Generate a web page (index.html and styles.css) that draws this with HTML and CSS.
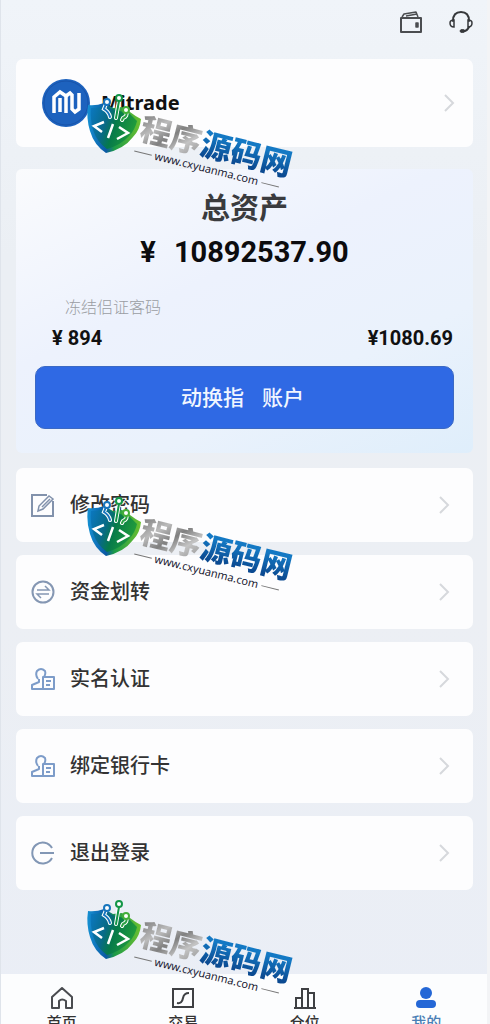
FILE: index.html
```html
<!DOCTYPE html>
<html lang="zh-CN">
<head>
<meta charset="utf-8">
<meta name="viewport" content="width=device-width, initial-scale=1">
<title>我的</title>
<link rel="stylesheet" href="styles.css">
</head>
<body>
<svg class="defs" aria-hidden="true">
  <defs>
    <linearGradient id="shieldFill" x1="0" y1="0" x2="1" y2="0.3">
      <stop offset="0" stop-color="#0b78c2"/><stop offset="0.4" stop-color="#086a86"/><stop offset="0.6" stop-color="#067a4a"/><stop offset="1" stop-color="#1f9a3c"/>
    </linearGradient>
    <linearGradient id="shieldEdge" x1="0" y1="0" x2="1" y2="0">
      <stop offset="0" stop-color="#1590d2"/><stop offset="0.35" stop-color="#0b58a4"/><stop offset="0.5" stop-color="#1c9a48"/><stop offset="1" stop-color="#6cc030"/>
    </linearGradient>
    <symbol id="shield" viewBox="0 0 58 64">
      <path d="M2 13Q10 14 18 11L27 16L36 15L44 20Q49 24 55 27Q54 38 47 45Q38 57 20 61Q8 53 4 39Q0 26 2 13Z" fill="url(#shieldEdge)"/>
      <path d="M5 16Q12 16 18 14L27 17L44 22Q48 26 51 29Q49 38 43 44Q35 53 21 57Q11 50 7 38Q4 27 5 16Z" fill="url(#shieldFill)"/>
      <g fill="none" stroke="#fff" stroke-width="4" stroke-linecap="round"><path d="M20 12L18 17Q23 20 24 25M33 8L30 26M40 20Q42 24 37 26L36 28"/></g>
      <g fill="none" stroke-width="2" stroke-linecap="round">
        <path d="M20 12L18 17Q23 20 24 25" stroke="#1775bd"/><path d="M33 9L30 26" stroke="#149647"/><path d="M40 20Q42 24 37 26L36 28" stroke="#2ba144"/>
      </g>
      <g fill="#fff" stroke-width="2"><circle cx="21" cy="10" r="3" stroke="#1775bd"/><circle cx="33" cy="6" r="3" stroke="#149647"/><circle cx="40" cy="18" r="3" stroke="#43ae3a"/></g>
      <path d="M18 30L8 34L16 40M27 32L22 46M33 35L42 41L31 47" fill="none" stroke="#fff" stroke-width="2.500"/>
    </symbol>
    <symbol id="chevron" viewBox="0 0 12 20"><path d="M2 2L10 10L2 18" fill="none" stroke="#d6d8dc" stroke-width="2"/></symbol>
    <symbol id="person-card" viewBox="0 0 24 24">
      <g fill="none" stroke="#7d9cc9" stroke-width="2" stroke-linejoin="round"><path d="M7 12Q4 8 6 4Q10 0 14 4Q15 7 13 10M8 12V15L1 18V22H12M12 10H23V22H12Z"/><path d="M15 14H20M15 18H19"/></g>
    </symbol>
  </defs>
</svg>

<div class="app">
  <header class="topbar">
    <button class="icon-button" type="button" aria-label="钱包">
      <svg width="24" height="24" viewBox="0 0 24 24" fill="none" stroke="#4b4d50" stroke-width="2" stroke-linejoin="round"><path d="M2 8H22V22H2Z"/><path d="M3 7L5 4L17 2L19 7M7 6L18 4" stroke-width="1.5"/><path d="M17 13H19V17H17Z" stroke-width="1.5" fill="#4b4d50"/></svg>
    </button>
    <button class="icon-button" type="button" aria-label="客服">
      <svg width="24" height="24" viewBox="0 0 24 24" fill="none" stroke="#36383b" stroke-width="2" stroke-linecap="round"><path d="M4 11Q4 2 12 2Q20 2 20 11"/><path d="M5 10Q1 10 1 13Q1 17 5 17ZM19 10Q23 10 23 13Q23 17 19 17Z" stroke-width="1.5"/><path d="M20 17Q18 21 15 21"/><ellipse cx="13.500" cy="21" rx="2.500" ry="1.500" fill="#36383b" stroke-width="1"/></svg>
    </button>
  </header>

  <main class="content">
    <a class="card profile" href="#profile">
      <svg width="50" height="50" viewBox="0 0 50 50" aria-hidden="true"><circle cx="25" cy="25" r="24" fill="#1d62be"/><circle cx="25" cy="25" r="22" fill="none" stroke="#1753aa"/><path d="M13 35V19L19 14L25 18V35" fill="none" stroke="#fff" stroke-width="3.500"/><path d="M19 34V20M25 18L29 15L31 17V31L34 34L38 31V15" fill="none" stroke="#fff" stroke-width="3.500"/></svg>
      <span class="brand">Mitrade</span>
      <svg class="chevron" width="12" height="20" aria-hidden="true"><use href="#chevron"/></svg>
    </a>

    <section class="assets">
      <h1 class="assets-title">总资产</h1>
      <p class="assets-total"><span>¥</span><span>10892537.90</span></p>
      <p class="assets-note">冻结侣证客码</p>
      <div class="assets-row"><span>¥ 894</span><span>¥1080.69</span></div>
      <button class="primary" type="button"><span>动换指</span><span>账户</span></button>
    </section>

    <nav class="menu" aria-label="账户设置">
      <a class="card item" href="#password">
        <svg width="24" height="24" viewBox="0 0 24 24" fill="none" stroke="#8292ac" stroke-width="2" aria-hidden="true"><path d="M16 2H1V23H22V8"/><path d="M7 18L8 13L18 3L22 6L12 16Z M11 14L19 6" stroke-width="1.500"/></svg>
        <span>修改密码</span><svg class="chevron" width="12" height="20" aria-hidden="true"><use href="#chevron"/></svg>
      </a>
      <a class="card item" href="#transfer">
        <svg width="24" height="24" viewBox="0 0 24 24" fill="none" stroke="#8597b3" stroke-width="2" aria-hidden="true"><circle cx="12" cy="12" r="10.500"/><path d="M6 10H18L14 6M18 14H6L10 18" stroke-width="1.500"/></svg>
        <span>资金划转</span><svg class="chevron" width="12" height="20" aria-hidden="true"><use href="#chevron"/></svg>
      </a>
      <a class="card item" href="#verify">
        <svg width="24" height="24" aria-hidden="true"><use href="#person-card"/></svg>
        <span>实名认证</span><svg class="chevron" width="12" height="20" aria-hidden="true"><use href="#chevron"/></svg>
      </a>
      <a class="card item" href="#bank">
        <svg width="24" height="24" aria-hidden="true"><use href="#person-card"/></svg>
        <span>绑定银行卡</span><svg class="chevron" width="12" height="20" aria-hidden="true"><use href="#chevron"/></svg>
      </a>
      <a class="card item" href="#logout">
        <svg width="24" height="24" viewBox="0 0 24 24" fill="none" stroke="#8297b5" stroke-width="2" aria-hidden="true"><path d="M21 7A10.500 10.500 0 1 0 21 17M9 12H23"/></svg>
        <span>退出登录</span><svg class="chevron" width="12" height="20" aria-hidden="true"><use href="#chevron"/></svg>
      </a>
    </nav>
  </main>

  <nav class="tabs" aria-label="主导航">
    <a class="tab" href="#home"><svg width="22" height="22" viewBox="0 0 22 22" fill="none" stroke="#4a4c50" stroke-width="2" stroke-linejoin="round"><path d="M1 10L11 1L21 10V21H15V14Q11 11 8 14V21H1Z"/></svg><span>首页</span></a>
    <a class="tab" href="#trade"><svg width="22" height="22" viewBox="0 0 22 22" fill="none" stroke="#3e4043" stroke-width="2"><path d="M1 2H21V20H1Z"/><path d="M5 16Q10 17 11 11Q12 6 17 6"/></svg><span>交易</span></a>
    <a class="tab" href="#positions"><svg width="22" height="22" viewBox="0 0 22 22" fill="none" stroke="#3e4043" stroke-width="2"><path d="M0 21H22M2 20V11H8V20M8 20V2H14V20M14 20V6H20V20"/></svg><span>仓位</span></a>
    <a class="tab active" href="#me" aria-current="page"><svg width="22" height="22" viewBox="0 0 22 22" fill="#2467d6"><circle cx="11" cy="6" r="6"/><rect x="1" y="13" width="20" height="8" rx="4"/></svg><span>我的</span></a>
  </nav>

  <div class="marks">
    <div class="mark"><svg width="58" height="64" aria-hidden="true"><use href="#shield"/></svg>
      <div class="mark-text"><div class="mark-name"><span class="silver">程序</span><span class="blue">源码网</span></div><div class="mark-url">www.cxyuanma.com</div></div></div>
    <div class="mark"><svg width="58" height="64" aria-hidden="true"><use href="#shield"/></svg>
      <div class="mark-text"><div class="mark-name"><span class="silver">程序</span><span class="blue">源码网</span></div><div class="mark-url">www.cxyuanma.com</div></div></div>
    <div class="mark"><svg width="58" height="64" aria-hidden="true"><use href="#shield"/></svg>
      <div class="mark-text"><div class="mark-name"><span class="silver">程序</span><span class="blue">源码网</span></div><div class="mark-url">www.cxyuanma.com</div></div></div>
  </div>
</div>
</body>
</html>
```
FILE: styles.css
```css
* { box-sizing: border-box; }

body {
  margin: 0;
  font-family: Roboto, "Noto Sans CJK SC", sans-serif;
  color: #333;
}

h1, p { margin: 0; }
a { color: inherit; text-decoration: none; }
button { border: 0; padding: 0; background: none; font: inherit; cursor: pointer; }
svg { display: block; flex: none; }
.defs { position: absolute; width: 0; height: 0; }

.app {
  position: relative;
  display: flex;
  flex-direction: column;
  height: 100vh;
  overflow: hidden;
  background: linear-gradient(#f0f4f9, #ebeff4 25%, #eceff4 60%, #eaeef6);
  border-left: 1px solid #dfe4eb;
  border-right: 3px solid #f3f4f6;
}

.topbar {
  display: flex;
  flex: none;
  justify-content: flex-end;
  gap: 26px;
  height: 59px;
  padding: 10px 14px 0 0;
}

.icon-button { height: 24px; }

.content {
  display: flex;
  flex: 1;
  flex-direction: column;
  padding: 0 14px 0 15px;
  min-height: 0;
}

.card {
  display: flex;
  align-items: center;
  border-radius: 7px;
  background: #fdfdfe;
}

.chevron { margin-left: auto; }

.profile {
  flex: none;
  height: 88px;
  padding: 0 18px 0 25px;
}

.brand {
  padding-left: 10px;
  font: bold 20px/28px "Noto Sans", sans-serif;
  color: #111;
}

.assets {
  flex: none;
  margin: 22px 0 15px;
  padding: 22px 19px 24px;
  border-radius: 6px;
  background: linear-gradient(155deg, #fafbfd, #edf2fd 40%, #eaf2fc 70%, #dfeefb);
}

.assets-title {
  font-size: 29px;
  font-weight: 700;
  line-height: 36px;
  text-align: center;
  color: #3a3b3e;
}

.assets-total {
  display: flex;
  justify-content: center;
  gap: 18px;
  padding-top: 7px;
  font-size: 29px;
  font-weight: 700;
  line-height: 36px;
  color: #0c0c0e;
}

.assets-note {
  padding: 26px 30px 0;
  font-size: 16px;
  font-weight: 300;
  line-height: 24px;
  color: #9a9da2;
}

.assets-row {
  display: flex;
  justify-content: space-between;
  padding: 6px 1px 16px 17px;
  font-size: 20px;
  font-weight: 700;
  line-height: 24px;
  color: #111;
}

.primary {
  display: flex;
  align-items: center;
  justify-content: center;
  gap: 18px;
  width: 100%;
  height: 63px;
  padding: 0 4px 4px 0;
  border: 1px solid #3b69c4;
  border-radius: 10px;
  background: #2f69e4;
  color: #f1f6ff;
  font-size: 21px;
  font-weight: 500;
}

.menu {
  display: flex;
  flex-direction: column;
  gap: 13px;
}

.item {
  gap: 15px;
  height: 74px;
  padding: 0 23px 0 15px;
  font-size: 20px;
  font-weight: 500;
  line-height: 28px;
}

.tabs {
  display: grid;
  flex: none;
  grid-template-columns: repeat(4, 1fr);
  height: 50px;
  padding-top: 13px;
  background: #fcfdfe;
}

.tab {
  display: flex;
  flex-direction: column;
  align-items: center;
  gap: 2px;
  font-size: 15px;
  font-weight: 500;
  line-height: 24px;
}

.active { color: #4a7fb5; }

.marks {
  position: absolute;
  top: 92px;
  left: 85px;
  display: flex;
  flex-direction: column;
  gap: 303px;
  pointer-events: none;
}

.mark {
  display: flex;
  width: 210px;
  height: 100px;
}

.mark-text {
  flex: none;
  width: 150px;
  margin-left: -5px;
  padding-top: 22px;
  transform: rotate(14deg);
  transform-origin: 0 40px;
}

.mark-name {
  padding-left: 1px;
  font-size: 31px;
  font-weight: 900;
  line-height: 30px;
  white-space: nowrap;
}

.silver, .blue {
  background-clip: text;
  -webkit-background-clip: text;
  color: transparent;
}

.silver { background-image: linear-gradient(135deg, #777, #bbb 30%, #808080 50%, #c4c4c4 70%, #888); }
.blue { background-image: linear-gradient(#1479c4 20%, #0b4a91 80%); }

.mark-url {
  display: flex;
  align-items: center;
  gap: 3px;
  font: 11px/14px "Noto Sans", sans-serif;
  color: #223;
}

.mark-url::before, .mark-url::after {
  content: "";
  width: 18px;
  height: 1px;
  background: #777;
}
```
